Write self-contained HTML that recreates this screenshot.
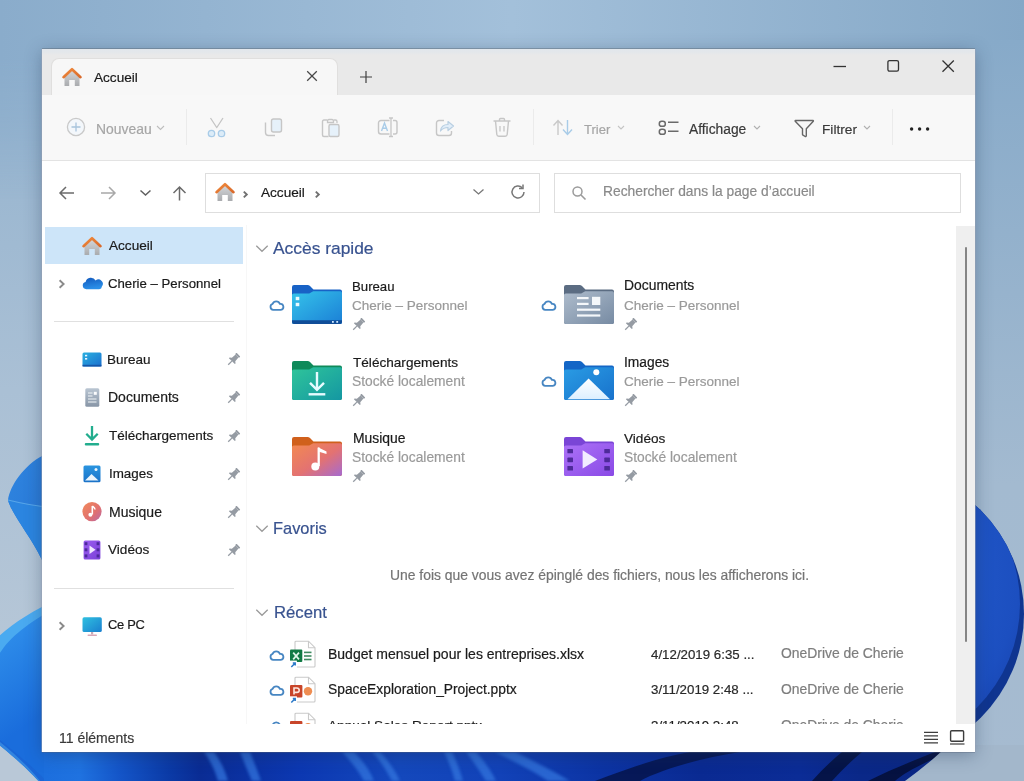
<!DOCTYPE html>
<html><head><meta charset="utf-8">
<style>
html,body{margin:0;padding:0}
body{width:1024px;height:781px;overflow:hidden;position:relative;font-family:"Liberation Sans",sans-serif;background:#93b3cf}
.a{position:absolute}
.t{position:absolute;line-height:1;white-space:nowrap;color:#1b1b1b;will-change:transform;-webkit-text-stroke:0.2px currentColor}
svg{position:absolute;overflow:visible}
</style></head><body>
<!-- wallpaper -->
<svg class="a" style="left:0;top:0" width="1024" height="781" viewBox="0 0 1024 781">
<defs>
<linearGradient id="bgG" x1="0" y1="0" x2="1" y2="0">
<stop offset="0" stop-color="#8aaccb"/><stop offset="0.5" stop-color="#a3c0da"/><stop offset="1" stop-color="#85a8c7"/>
</linearGradient>
<linearGradient id="bgL" x1="0" y1="0" x2="0" y2="1">
<stop offset="0" stop-color="#8fb0cd"/><stop offset="0.5" stop-color="#aac0d5"/><stop offset="1" stop-color="#bccad8"/>
</linearGradient>
<linearGradient id="bgR" x1="0" y1="0" x2="0" y2="1">
<stop offset="0" stop-color="#87aac9"/><stop offset="0.6" stop-color="#a3bad0"/><stop offset="1" stop-color="#a6bbd0"/>
</linearGradient>
<linearGradient id="pt1" x1="0" y1="0" x2="1" y2="1">
<stop offset="0" stop-color="#2f86e0"/><stop offset="0.55" stop-color="#2a7ad8"/><stop offset="1" stop-color="#1c5fc8"/>
</linearGradient>
<linearGradient id="pt2" x1="0" y1="0" x2="1" y2="1">
<stop offset="0" stop-color="#3a95ea"/><stop offset="0.5" stop-color="#1d6fdc"/><stop offset="1" stop-color="#1650c0"/>
</linearGradient>
<linearGradient id="bb" x1="0" y1="0" x2="1" y2="0">
<stop offset="0" stop-color="#1f6fe0"/><stop offset="0.17" stop-color="#0f44b0"/><stop offset="0.25" stop-color="#1a58c8"/><stop offset="0.32" stop-color="#0a2f98"/><stop offset="0.45" stop-color="#1550c8"/><stop offset="0.55" stop-color="#0f3cae"/><stop offset="0.62" stop-color="#0a2c98"/><stop offset="0.75" stop-color="#0b35a8"/><stop offset="0.85" stop-color="#0a2680"/><stop offset="1" stop-color="#0a2680"/>
</linearGradient>
<linearGradient id="tmg" x1="0" y1="0" x2="0" y2="200" gradientUnits="userSpaceOnUse"><stop offset="0" stop-color="#fff"/><stop offset="0.3" stop-color="#fff"/><stop offset="1" stop-color="#000"/></linearGradient>
<radialGradient id="disc" cx="0.4" cy="0.4" r="0.7">
<stop offset="0" stop-color="#2a66d6"/><stop offset="0.85" stop-color="#1c4fc0"/><stop offset="1" stop-color="#1845b2"/>
</radialGradient>
</defs>
<rect width="1024" height="781" fill="url(#bgL)"/>
<mask id="tm"><rect width="1024" height="781" fill="url(#tmg)"/></mask><rect x="0" y="0" width="1024" height="200" fill="url(#bgG)" mask="url(#tm)"/>
<rect x="960" y="40" width="64" height="741" fill="url(#bgR)"/>
<!-- left petals -->
<path d="M60 448 L42 456 C25 465 10 485 8 500 C12 515 30 535 42 560 L60 575 Z" fill="url(#pt1)"/>
<path d="M8 500 C20 503 32 506 60 507 L60 575 L42 560 C30 535 12 515 8 500 Z" fill="#2b85e0"/>
<path d="M8 500 C20 503 32 506 50 507" fill="none" stroke="#7cc4f4" stroke-width="1.2" opacity="0.55"/>
<linearGradient id="pt3" x1="0" y1="620" x2="60" y2="700" gradientUnits="userSpaceOnUse"><stop offset="0" stop-color="#3192ec"/><stop offset="1" stop-color="#1a6ddc"/></linearGradient>
<path d="M60 598 C30 612 10 625 -5 640 L-5 742 C15 758 28 770 38 781 L60 781 Z" fill="#4aaaf0"/>
<path d="M60 606 C35 618 12 635 2 650 L-5 660 L-5 738 C15 754 28 766 40 781 L60 781 Z" fill="url(#pt3)"/>
<path d="M-5 742 C15 758 28 770 38 781 L46 781 C34 768 20 756 -5 736 Z" fill="#1a60d0" opacity="0.5"/>
<!-- bottom band -->
<linearGradient id="bb2" x1="0" y1="0" x2="1024" y2="0" gradientUnits="userSpaceOnUse"><stop offset="0.0000" stop-color="#1c6fde"/><stop offset="0.0450" stop-color="#1c6fde"/><stop offset="0.0780" stop-color="#1f72e0"/><stop offset="0.1172" stop-color="#1455c8"/><stop offset="0.1660" stop-color="#0b3aa6"/><stop offset="0.1953" stop-color="#0a2c94"/><stop offset="0.2930" stop-color="#0c38b2"/><stop offset="0.3906" stop-color="#1448bc"/><stop offset="0.4883" stop-color="#1242b8"/><stop offset="0.5859" stop-color="#0c34a4"/><stop offset="0.6836" stop-color="#0a2a92"/><stop offset="0.7812" stop-color="#0b2c96"/><stop offset="0.8398" stop-color="#0a2888"/><stop offset="1.0000" stop-color="#0a2680"/></linearGradient>
<path d="M44 745 L1024 745 L1024 781 L44 781 Z" fill="url(#bb2)"/>
<path d="M-5 742 C15 758 28 770 38 781 L-5 781 Z" fill="#b9c8d7"/>
<filter id="bl" x="-20%" y="-20%" width="140%" height="140%"><feGaussianBlur stdDeviation="1.6"/></filter><g fill="#3478e0" opacity="0.7" filter="url(#bl)">
<path d="M204 752 L214 752 C220 760 225 770 228 781 L218 781 C215 770 210 760 204 752 Z"/>
<path d="M240 752 L250 752 C254 762 258 772 261 781 L252 781 C248 772 244 762 240 752 Z"/>
<path d="M342 752 L354 752 C362 760 370 770 374 781 L364 781 C358 770 350 760 342 752 Z"/>
<path d="M372 752 L380 752 C388 760 395 770 400 781 L392 781 C386 770 380 760 372 752 Z"/>
<path d="M444 752 L452 752 C456 760 460 770 463 781 L455 781 C452 770 448 760 444 752 Z"/>
<path d="M466 752 L476 752 C485 762 492 772 496 781 L486 781 C480 772 474 762 466 752 Z"/>
<path d="M495 752 L515 752 C535 762 555 772 570 781 L548 781 C535 772 515 762 495 752 Z"/>
</g>
<path d="M595 781 C625 770 655 758 690 752 L740 752 C700 758 660 770 640 781 Z" fill="#051650" opacity="0.9"/>
<path d="M812 781 C822 770 832 760 842 752 L862 752 C850 762 840 772 832 781 Z" fill="#040d30" opacity="0.75"/>
<path d="M868 781 C890 770 915 760 935 752 L950 752 C925 762 905 772 895 781 Z" fill="#040d30" opacity="0.8"/>
<path d="M948 745 L1024 745 L1024 781 L905 781 C920 770 935 758 948 745 Z" fill="#a3b7cb"/>
<!-- right disc -->
<clipPath id="rc"><rect x="975" y="0" width="60" height="781"/></clipPath><clipPath id="oc"><circle cx="878" cy="614" r="146"/></clipPath><g clip-path="url(#rc)"><circle cx="878" cy="614" r="146" fill="#0f3590"/><g clip-path="url(#oc)"><circle cx="874" cy="604" r="146" fill="url(#disc)"/></g></g>
</svg>
<!-- window -->
<div class="a" style="left:42px;top:49px;width:933px;height:703px;background:#fff;box-shadow:0 -1px 0 rgba(90,100,110,0.4),-1px 0 0 rgba(150,160,180,0.5),1px 0 0 rgba(150,160,180,0.5),0 1px 0 rgba(90,100,120,0.35),0 3px 16px rgba(30,50,80,0.36)"></div>
<!-- tab bar -->
<div class="a" style="left:42px;top:49px;width:933px;height:46px;background:linear-gradient(#e2e7ec 0px,#e3e7eb 3px,#e9e9e9 6px,#e9e9e9 100%)"></div>
<!-- tab -->
<div class="a" style="left:51px;top:57.5px;width:285px;height:38px;background:#f7f7f7;border:1px solid #e0dfde;border-bottom:none;border-radius:8px 8px 0 0"></div>
<!-- toolbar -->
<div class="a" style="left:42px;top:95px;width:933px;height:65px;background:#f8f8f8;border-bottom:1px solid #e3e3e3"></div>

<div class="t" style="left:94px;top:71px;font-size:13.6px">Accueil</div>
<div class="t" style="left:95.7px;top:122.9px;font-size:13.9px;color:#a6a6a6">Nouveau</div>
<div class="t" style="left:584.3px;top:122.9px;font-size:13px;color:#a6a6a6">Trier</div>
<div class="t" style="left:689.3px;top:122.9px;font-size:13.8px;color:#3a3a3a">Affichage</div>
<div class="t" style="left:821.7px;top:122.9px;font-size:13.7px;color:#3a3a3a">Filtrer</div>


<!-- address box -->
<div class="a" style="left:205px;top:173px;width:333px;height:38px;border:1px solid #dedede;background:#fff"></div>
<div class="a" style="left:554px;top:173px;width:405px;height:38px;border:1px solid #dedede;background:#fff"></div>
<!-- tab bar icons -->
<svg style="left:62px;top:67px" width="20" height="20" viewBox="0 0 20 20">
<defs><linearGradient id="hb" x1="0" y1="0" x2="0" y2="1"><stop offset="0" stop-color="#d4d6d9"/><stop offset="1" stop-color="#a9abae"/></linearGradient>
<linearGradient id="hr" x1="0" y1="0" x2="1" y2="1"><stop offset="0" stop-color="#f08a3c"/><stop offset="1" stop-color="#d9692a"/></linearGradient></defs>
<path d="M2.5 9 L10 3.5 L17.5 9 V19 H12.8 V13 H7.2 V19 H2.5 Z" fill="url(#hb)"/>
<path d="M1.5 10.2 L10 2.2 L18.5 10.2" fill="none" stroke="url(#hr)" stroke-width="2.6" stroke-linecap="round" stroke-linejoin="round"/>
</svg>
<svg style="left:306px;top:70px" width="12" height="12" viewBox="0 0 12 12"><path d="M1.2 1.2 L10.8 10.8 M10.8 1.2 L1.2 10.8" stroke="#484848" stroke-width="1.25"/></svg>
<svg style="left:360px;top:71px" width="12" height="12" viewBox="0 0 12 12"><path d="M6 0 V12 M0 6 H12" stroke="#404040" stroke-width="1.2"/></svg>
<!-- window controls -->
<svg style="left:833px;top:60px" width="14" height="14" viewBox="0 0 14 14"><path d="M0.5 6.5 H13" stroke="#333" stroke-width="1.3"/></svg>
<svg style="left:886px;top:59px" width="14" height="14" viewBox="0 0 14 14"><rect x="1.9" y="1.6" width="10.6" height="10.6" rx="1.6" fill="none" stroke="#333" stroke-width="1.3"/></svg>
<svg style="left:941px;top:59px" width="14" height="14" viewBox="0 0 14 14"><path d="M1.5 1.5 L12.8 12.8 M12.8 1.5 L1.5 12.8" stroke="#333" stroke-width="1.3"/></svg>

<!-- toolbar icons -->
<svg style="left:66px;top:117px" width="20" height="20" viewBox="0 0 20 20"><circle cx="10" cy="10" r="8.6" fill="#f3f7fb" stroke="#c9c9c9" stroke-width="1.3"/><path d="M10 5.5 V14.5 M5.5 10 H14.5" stroke="#a8c4dc" stroke-width="1.3"/></svg>
<svg style="left:156px;top:125px" width="9" height="6" viewBox="0 0 9 6"><path d="M1 1 L4.5 4.5 L8 1" fill="none" stroke="#bdbdbd" stroke-width="1.1"/></svg>
<div class="a" style="left:186px;top:109px;width:1px;height:36px;background:#ebebeb"></div>
<svg style="left:205px;top:115px" width="24" height="24" viewBox="0 0 24 24"><path d="M5.5 3 L12 13 M18 3 L11.5 13" stroke="#c4c4c4" stroke-width="1.3" fill="none"/><circle cx="6.5" cy="18.5" r="3.2" fill="#dcecf8" stroke="#a9cce8" stroke-width="1.3"/><circle cx="16.5" cy="18.5" r="3.2" fill="#dcecf8" stroke="#a9cce8" stroke-width="1.3"/></svg>
<svg style="left:262px;top:116px" width="22" height="22" viewBox="0 0 22 22"><path d="M3.5 6.5 V16.5 A3 3 0 0 0 6.5 19.5 H13" fill="none" stroke="#c6c6c6" stroke-width="1.4"/><rect x="9.5" y="3" width="10" height="13" rx="2" fill="#e6f1fa" stroke="#c6c6c6" stroke-width="1.4"/></svg>
<svg style="left:320px;top:116px" width="22" height="22" viewBox="0 0 22 22"><path d="M7 4 H4 A1.5 1.5 0 0 0 2.5 5.5 V19 A1.5 1.5 0 0 0 4 20.5 H8.5" fill="none" stroke="#c6c6c6" stroke-width="1.4"/><path d="M7.5 5 A1.5 1.5 0 0 1 9 3.5 H12 A1.5 1.5 0 0 1 13.5 5 V6.5 H7.5 Z" fill="none" stroke="#c6c6c6" stroke-width="1.3"/><path d="M14 4 H15.5 A1.5 1.5 0 0 1 17 5.5 V7" fill="none" stroke="#c6c6c6" stroke-width="1.3"/><rect x="9" y="8.5" width="10" height="12" rx="1.5" fill="#e6f1fa" stroke="#c6c6c6" stroke-width="1.4"/></svg>
<svg style="left:377px;top:116px" width="22" height="22" viewBox="0 0 22 22"><path d="M12.5 4.5 H4 A2.5 2.5 0 0 0 1.5 7 V15.5 A2.5 2.5 0 0 0 4 18 H12.5" fill="none" stroke="#c6c6c6" stroke-width="1.4"/><path d="M16 4.5 H18 A2 2 0 0 1 20 6.5 V16 A2 2 0 0 1 18 18 H16" fill="none" stroke="#c6c6c6" stroke-width="1.4"/><path d="M14 2 V20.5 M12 2 H16 M12 20.5 H16" stroke="#c6c6c6" stroke-width="1.3"/><path d="M4.5 15 L7.5 7 L10.5 15 M5.6 12.3 H9.4" fill="none" stroke="#a9cce8" stroke-width="1.4"/></svg>
<svg style="left:434px;top:116px" width="22" height="22" viewBox="0 0 22 22"><path d="M10 4.5 H5 A2.5 2.5 0 0 0 2.5 7 V17 A2.5 2.5 0 0 0 5 19.5 H15 A2.5 2.5 0 0 0 17.5 17 V15" fill="none" stroke="#c6c6c6" stroke-width="1.4"/><path d="M6.5 15 C7 10.5 10 8.5 14 8.5 V5.5 L19.5 10 L14 14.5 V11.5 C11 11.5 8.5 12.5 6.5 15 Z" fill="#e2eef9" stroke="#b8cfe2" stroke-width="1.2" stroke-linejoin="round"/></svg>
<svg style="left:491px;top:116px" width="22" height="22" viewBox="0 0 22 22"><path d="M2.5 5 H19.5 M8.5 5 V3.5 A1 1 0 0 1 9.5 2.5 H12.5 A1 1 0 0 1 13.5 3.5 V5" fill="none" stroke="#c6c6c6" stroke-width="1.4"/><path d="M4.5 5 L5.8 18.5 A2 2 0 0 0 7.8 20.2 H14.2 A2 2 0 0 0 16.2 18.5 L17.5 5" fill="none" stroke="#c6c6c6" stroke-width="1.4"/><path d="M9 10 V15.5 M13 10 V15.5" stroke="#c6c6c6" stroke-width="1.3"/></svg>
<div class="a" style="left:533px;top:109px;width:1px;height:36px;background:#ebebeb"></div>
<svg style="left:552px;top:119px" width="22" height="17" viewBox="0 0 22 17"><path d="M6 16 V2 M1.5 6.5 L6 1.5 L10.5 6.5" fill="none" stroke="#c9c9c9" stroke-width="1.4"/><path d="M15.5 1 V15 M11 10.5 L15.5 15.5 L20 10.5" fill="none" stroke="#a9cce8" stroke-width="1.4"/></svg>
<svg style="left:617px;top:125px" width="8" height="6" viewBox="0 0 8 6"><path d="M1 1 L4 4 L7 1" fill="none" stroke="#c4c4c4" stroke-width="1.1"/></svg>
<svg style="left:657px;top:119px" width="24" height="18" viewBox="0 0 24 18"><rect x="2.3" y="2.3" width="6" height="5" rx="2.4" fill="none" stroke="#6a6a6a" stroke-width="1.5"/><rect x="2.3" y="10.3" width="6" height="5" rx="2.4" fill="none" stroke="#6a6a6a" stroke-width="1.5"/><path d="M11 3.3 H21.5 M11 12.3 H21.5" stroke="#6a6a6a" stroke-width="1.5"/></svg>
<svg style="left:753px;top:125px" width="8" height="6" viewBox="0 0 8 6"><path d="M1 1 L4 4 L7 1" fill="none" stroke="#b0b0b0" stroke-width="1.1"/></svg>
<svg style="left:794px;top:119px" width="21" height="19" viewBox="0 0 21 19"><path d="M1.5 1.5 H19 A0.5 0.5 0 0 1 19.3 2.3 L12.3 9.8 V16.8 A0.8 0.8 0 0 1 11.2 17.5 L9 16.2 A1 1 0 0 1 8.5 15.4 V9.8 L1.2 2.3 A0.5 0.5 0 0 1 1.5 1.5 Z" fill="none" stroke="#666" stroke-width="1.4" stroke-linejoin="round"/></svg>
<svg style="left:863px;top:125px" width="8" height="6" viewBox="0 0 8 6"><path d="M1 1 L4 4 L7 1" fill="none" stroke="#b0b0b0" stroke-width="1.1"/></svg>
<div class="a" style="left:892px;top:109px;width:1px;height:36px;background:#ebebeb"></div>
<svg style="left:909px;top:126px" width="22" height="6" viewBox="0 0 22 6"><circle cx="2.6" cy="3" r="1.7" fill="#222"/><circle cx="10.6" cy="3" r="1.7" fill="#222"/><circle cx="18.6" cy="3" r="1.7" fill="#222"/></svg>

<!-- nav -->
<svg style="left:58px;top:185px" width="17" height="16" viewBox="0 0 17 16"><path d="M16 8 H2.5 M8 2 L2 8 L8 14" fill="none" stroke="#6b6b6b" stroke-width="1.5"/></svg>
<svg style="left:100px;top:185px" width="17" height="16" viewBox="0 0 17 16"><path d="M1 8 H14.5 M9 2 L15 8 L9 14" fill="none" stroke="#a8a8a8" stroke-width="1.5"/></svg>
<svg style="left:139px;top:189px" width="13" height="8" viewBox="0 0 13 8"><path d="M1.5 1.5 L6.5 6 L11.5 1.5" fill="none" stroke="#606060" stroke-width="1.5"/></svg>
<svg style="left:171px;top:185px" width="17" height="16" viewBox="0 0 17 16"><path d="M8.5 15.5 V2 M2.5 8 L8.5 2 L14.5 8" fill="none" stroke="#6b6b6b" stroke-width="1.5"/></svg>
<svg style="left:215px;top:182px" width="20" height="20" viewBox="0 0 20 20">
<path d="M2.5 9 L10 3.5 L17.5 9 V19 H12.8 V13 H7.2 V19 H2.5 Z" fill="url(#hb)"/>
<path d="M1.5 10.2 L10 2.2 L18.5 10.2" fill="none" stroke="url(#hr)" stroke-width="2.6" stroke-linecap="round" stroke-linejoin="round"/>
</svg>
<svg style="left:242px;top:190px" width="7" height="9" viewBox="0 0 7 9"><path d="M1.8 1.6 L4.8 4.5 L1.8 7.4" fill="none" stroke="#707070" stroke-width="1.9"/></svg>
<svg style="left:314px;top:190px" width="7" height="9" viewBox="0 0 7 9"><path d="M1.8 1.6 L4.8 4.5 L1.8 7.4" fill="none" stroke="#707070" stroke-width="1.9"/></svg>
<svg style="left:472px;top:188px" width="13" height="8" viewBox="0 0 13 8"><path d="M1.5 1.5 L6.5 6 L11.5 1.5" fill="none" stroke="#777" stroke-width="1.3"/></svg>
<svg style="left:509px;top:183px" width="18" height="18" viewBox="0 0 18 18"><path d="M15 9 A6 6 0 1 1 13.2 4.7" fill="none" stroke="#777" stroke-width="1.5"/><path d="M14 1.5 V5.5 H10" fill="none" stroke="#777" stroke-width="1.5"/></svg>
<svg style="left:571px;top:185px" width="16" height="16" viewBox="0 0 16 16"><circle cx="6.5" cy="6.5" r="4.5" fill="none" stroke="#9b9b9b" stroke-width="1.5"/><path d="M10 10 L14.5 14.5" stroke="#9b9b9b" stroke-width="1.6"/></svg>

<div class="t" style="left:260.6px;top:185.6px;font-size:13.6px">Accueil</div>
<div class="t" style="left:603.2px;top:185.2px;font-size:13.8px;color:#8a8a8a">Rechercher dans la page d’accueil</div>

<!-- sidebar -->
<div class="a" style="left:45px;top:227px;width:198px;height:37px;background:#cde5f9"></div>
<div class="a" style="left:246px;top:225px;width:1px;height:499px;background:#f7f7f7"></div>
<div class="a" style="left:54px;top:321px;width:180px;height:1px;background:#e0e0e0"></div>
<div class="a" style="left:54px;top:588px;width:180px;height:1px;background:#e0e0e0"></div>
<div class="t" style="left:108.7px;top:238.9px;font-size:13.6px">Accueil</div>
<div class="t" style="left:108px;top:277px;font-size:13.2px">Cherie – Personnel</div>
<div class="t" style="left:107.2px;top:353px;font-size:13.5px">Bureau</div>
<div class="t" style="left:107.6px;top:390.0px;font-size:14px">Documents</div>
<div class="t" style="left:108.7px;top:429.2px;font-size:13.5px">Téléchargements</div>
<div class="t" style="left:108.7px;top:467.2px;font-size:13.4px">Images</div>
<div class="t" style="left:108.7px;top:504.6px;font-size:14px">Musique</div>
<div class="t" style="left:107.6px;top:543px;font-size:13.6px">Vidéos</div>
<div class="t" style="left:108.2px;top:619.3px;font-size:12.9px;letter-spacing:-0.3px">Ce PC</div>
<div class="t" style="left:59px;top:731px;font-size:14px;color:#3a3a3a">11 éléments</div>


<!-- sidebar icons -->
<svg style="left:82px;top:236px" width="20" height="20" viewBox="0 0 20 20">
<path d="M2.5 9 L10 3.5 L17.5 9 V19 H12.8 V13 H7.2 V19 H2.5 Z" fill="url(#hb)"/>
<path d="M1.5 10.2 L10 2.2 L18.5 10.2" fill="none" stroke="url(#hr)" stroke-width="2.6" stroke-linecap="round" stroke-linejoin="round"/>
</svg>
<svg style="left:57px;top:278px" width="9" height="12" viewBox="0 0 9 12"><path d="M2.6 2.3 L6.6 6 L2.6 9.7" fill="none" stroke="#8a8a8a" stroke-width="1.9"/></svg>
<svg style="left:82px;top:276px" width="21" height="14" viewBox="0 0 21 14"><defs><linearGradient id="od" x1="0" y1="0" x2="0.3" y2="1"><stop offset="0" stop-color="#1259bd"/><stop offset="1" stop-color="#2b8fe8"/></linearGradient></defs>
<path d="M4.3 13.2 A3.7 3.7 0 0 1 3.6 5.9 A5.4 5.4 0 0 1 13.6 4.6 A4.3 4.3 0 0 1 19.9 10.4 A3 3 0 0 1 17.2 13.2 Z" fill="url(#od)"/></svg>
<svg style="left:82px;top:352px" width="20" height="15" viewBox="0 0 20 15"><defs><linearGradient id="dk" x1="0" y1="0" x2="1" y2="1"><stop offset="0" stop-color="#2ab0e0"/><stop offset="1" stop-color="#1a6fcf"/></linearGradient></defs>
<rect x="0.5" y="0.5" width="19" height="14" rx="1.5" fill="url(#dk)"/><rect x="0.5" y="12.8" width="19" height="1.7" fill="#1656a8"/><rect x="3" y="2.8" width="2.2" height="1.6" fill="#e8f6ff"/><rect x="3" y="6" width="2.2" height="1.6" fill="#e8f6ff"/></svg>
<svg style="left:85px;top:388px" width="15" height="19" viewBox="0 0 15 19"><defs><linearGradient id="dc" x1="0" y1="0" x2="0" y2="1"><stop offset="0" stop-color="#b9c5d2"/><stop offset="1" stop-color="#8795a6"/></linearGradient></defs>
<rect x="0.3" y="0.3" width="14" height="18.5" rx="1.5" fill="url(#dc)"/><path d="M3 5 H7.5 M3 8 H7.5 M3 11 H11.5 M3 14 H11.5" stroke="#f2f5f8" stroke-width="1.2"/><rect x="8.8" y="3.8" width="3" height="3" fill="#fbfcfd"/></svg>
<svg style="left:84px;top:425px" width="16" height="21" viewBox="0 0 16 21"><path d="M8 1 V14.5 M2.3 8.8 L8 14.5 L13.7 8.8" fill="none" stroke="#22ad8e" stroke-width="2.3"/><rect x="0.8" y="18" width="14.4" height="2.5" rx="1.1" fill="#22ad8e"/></svg>
<svg style="left:83px;top:465px" width="18" height="18" viewBox="0 0 18 18"><defs><linearGradient id="im" x1="0" y1="0" x2="0" y2="1"><stop offset="0" stop-color="#2a95e0"/><stop offset="1" stop-color="#1a72c8"/></linearGradient></defs>
<rect x="0.5" y="0.5" width="17" height="16.8" rx="1.5" fill="url(#im)"/><path d="M2 15.6 L8.5 9 L15.5 15.6 Z" fill="#eaf4fc"/><circle cx="13" cy="4.6" r="1.5" fill="#eaf4fc"/></svg>
<svg style="left:82px;top:501px" width="20" height="21" viewBox="0 0 20 21"><defs><linearGradient id="mu" x1="0" y1="0" x2="1" y2="1"><stop offset="0" stop-color="#f28a5a"/><stop offset="0.6" stop-color="#e07070"/><stop offset="1" stop-color="#b86aa8"/></linearGradient></defs>
<circle cx="10" cy="10.6" r="9.6" fill="url(#mu)"/><path d="M10.3 5 V13.5" stroke="#fff" stroke-width="1.6"/><path d="M10.3 5 C11.5 6 13 6.5 13 8.5" fill="none" stroke="#fff" stroke-width="1.5"/><circle cx="8.4" cy="13.7" r="2" fill="#fff"/></svg>
<svg style="left:83px;top:540px" width="18" height="20" viewBox="0 0 18 20"><defs><linearGradient id="vd" x1="0" y1="0" x2="1" y2="1"><stop offset="0" stop-color="#9b5ef0"/><stop offset="1" stop-color="#7a3fd8"/></linearGradient></defs>
<rect x="0.6" y="0.4" width="16.8" height="19" rx="1.5" fill="url(#vd)"/>
<g fill="#4d2a9c"><rect x="1.6" y="2.2" width="2.8" height="3"/><rect x="1.6" y="8.3" width="2.8" height="3"/><rect x="1.6" y="14.4" width="2.8" height="3"/><rect x="13.6" y="2.2" width="2.8" height="3"/><rect x="13.6" y="8.3" width="2.8" height="3"/><rect x="13.6" y="14.4" width="2.8" height="3"/></g>
<path d="M6.5 5.5 L12.5 9.8 L6.5 14 Z" fill="#f0e8ff"/></svg>
<svg style="left:57px;top:620px" width="9" height="12" viewBox="0 0 9 12"><path d="M2.6 2.3 L6.6 6 L2.6 9.7" fill="none" stroke="#8a8a8a" stroke-width="1.9"/></svg>
<svg style="left:82px;top:617px" width="20" height="20" viewBox="0 0 20 20"><defs><linearGradient id="pc" x1="0" y1="0" x2="1" y2="1"><stop offset="0" stop-color="#2fc0e0"/><stop offset="1" stop-color="#1a7fcf"/></linearGradient></defs>
<rect x="0.5" y="0.3" width="19.3" height="14.8" rx="1.6" fill="url(#pc)"/><rect x="9" y="15" width="2.2" height="2.5" fill="#c9a9b5"/><rect x="5.5" y="17.5" width="9.5" height="1.4" rx="0.7" fill="#d9a7b8"/></svg>
<svg style="left:226px;top:353px" width="14" height="14" viewBox="0 0 14 14"><g transform="rotate(45 7 7)" fill="#959ba3"><rect x="4.3" y="-0.6" width="5.4" height="1.9" rx="0.5"/><path d="M5 1.3 H9 L9.4 6.2 L11.2 7.6 V8.6 H2.8 V7.6 L4.6 6.2 Z"/><rect x="6.35" y="8.6" width="1.3" height="5.2"/></g></svg><svg style="left:226px;top:391px" width="14" height="14" viewBox="0 0 14 14"><g transform="rotate(45 7 7)" fill="#959ba3"><rect x="4.3" y="-0.6" width="5.4" height="1.9" rx="0.5"/><path d="M5 1.3 H9 L9.4 6.2 L11.2 7.6 V8.6 H2.8 V7.6 L4.6 6.2 Z"/><rect x="6.35" y="8.6" width="1.3" height="5.2"/></g></svg><svg style="left:226px;top:430px" width="14" height="14" viewBox="0 0 14 14"><g transform="rotate(45 7 7)" fill="#959ba3"><rect x="4.3" y="-0.6" width="5.4" height="1.9" rx="0.5"/><path d="M5 1.3 H9 L9.4 6.2 L11.2 7.6 V8.6 H2.8 V7.6 L4.6 6.2 Z"/><rect x="6.35" y="8.6" width="1.3" height="5.2"/></g></svg><svg style="left:226px;top:468px" width="14" height="14" viewBox="0 0 14 14"><g transform="rotate(45 7 7)" fill="#959ba3"><rect x="4.3" y="-0.6" width="5.4" height="1.9" rx="0.5"/><path d="M5 1.3 H9 L9.4 6.2 L11.2 7.6 V8.6 H2.8 V7.6 L4.6 6.2 Z"/><rect x="6.35" y="8.6" width="1.3" height="5.2"/></g></svg><svg style="left:226px;top:506px" width="14" height="14" viewBox="0 0 14 14"><g transform="rotate(45 7 7)" fill="#959ba3"><rect x="4.3" y="-0.6" width="5.4" height="1.9" rx="0.5"/><path d="M5 1.3 H9 L9.4 6.2 L11.2 7.6 V8.6 H2.8 V7.6 L4.6 6.2 Z"/><rect x="6.35" y="8.6" width="1.3" height="5.2"/></g></svg><svg style="left:226px;top:544px" width="14" height="14" viewBox="0 0 14 14"><g transform="rotate(45 7 7)" fill="#959ba3"><rect x="4.3" y="-0.6" width="5.4" height="1.9" rx="0.5"/><path d="M5 1.3 H9 L9.4 6.2 L11.2 7.6 V8.6 H2.8 V7.6 L4.6 6.2 Z"/><rect x="6.35" y="8.6" width="1.3" height="5.2"/></g></svg>
<!-- content -->
<div class="t" style="left:272.6px;top:239.8px;font-size:17.4px;color:#38528f">Accès rapide</div>
<div class="t" style="left:352px;top:280px;font-size:13.2px">Bureau</div>
<div class="t" style="left:352px;top:299px;font-size:13.5px;color:#9a9a9a">Cherie – Personnel</div>
<div class="t" style="left:352.6px;top:356.3px;font-size:13.6px">Téléchargements</div>
<div class="t" style="left:352px;top:375.3px;font-size:13.8px;color:#9a9a9a">Stocké localement</div>
<div class="t" style="left:352.5px;top:431.8px;font-size:13.9px">Musique</div>
<div class="t" style="left:352px;top:451px;font-size:13.8px;color:#9a9a9a">Stocké localement</div>
<div class="t" style="left:624px;top:279.2px;font-size:13.9px">Documents</div>
<div class="t" style="left:624px;top:299px;font-size:13.5px;color:#9a9a9a">Cherie – Personnel</div>
<div class="t" style="left:624px;top:356px;font-size:13.8px">Images</div>
<div class="t" style="left:624px;top:375.3px;font-size:13.5px;color:#9a9a9a">Cherie – Personnel</div>
<div class="t" style="left:623.5px;top:432.2px;font-size:13.6px">Vidéos</div>
<div class="t" style="left:623.5px;top:451px;font-size:13.8px;color:#9a9a9a">Stocké localement</div>

<div class="t" style="left:273px;top:519.9px;font-size:16.4px;color:#38528f">Favoris</div>
<div class="t" style="left:389.5px;top:569px;font-size:13.9px;color:#747474">Une fois que vous avez épinglé des fichiers, nous les afficherons ici.</div>
<div class="t" style="left:273.8px;top:605.2px;font-size:16.7px;color:#38528f">Récent</div>

<div class="t" style="left:328.2px;top:647.3px;font-size:14px">Budget mensuel pour les entreprises.xlsx</div>
<div class="t" style="left:327.7px;top:683px;font-size:13.8px">SpaceExploration_Project.pptx</div>
<div class="t" style="left:651px;top:647.8px;font-size:13.3px;color:#2a2a2a">4/12/2019 6:35 ...</div>
<div class="t" style="left:651px;top:683.4px;font-size:13.3px;color:#2a2a2a">3/11/2019 2:48 ...</div>
<div class="t" style="left:780.8px;top:647.3px;font-size:13.9px;color:#7d7d7d">OneDrive de Cherie</div>
<div class="t" style="left:780.8px;top:683px;font-size:13.9px;color:#7d7d7d">OneDrive de Cherie</div>

<svg style="left:292px;top:284.7px" width="50" height="39" viewBox="0 0 50 39"><defs><linearGradient id="f1" x1="0" y1="0" x2="1" y2="1"><stop offset="0" stop-color="#35c3ea"/><stop offset="1" stop-color="#1b7fd6"/></linearGradient></defs>
<path d="M0 2 Q0 0 2 0 H15.5 Q17 0 18 0.9 L21.5 4.6 H48 Q50 4.6 50 6.6 V37 Q50 39 48 39 H2 Q0 39 0 37 Z" fill="#1862c6"/>
<path d="M0 10 Q0 8.4 1.8 8.4 H17.2 L21.2 6.2 H48.2 Q50 6.2 50 8 V37 Q50 39 48 39 H2 Q0 39 0 37 Z" fill="url(#f1)"/><path d="M0 35.3 H50 V36.8 Q50 39 47.8 39 H2.2 Q0 39 0 36.8 Z" fill="#104d98"/><rect x="3.7" y="11.8" width="3.6" height="3.4" fill="#eafaff"/><rect x="3.7" y="17.8" width="3.6" height="3.4" fill="#eafaff"/><rect x="40" y="36" width="1.8" height="1.8" fill="#cfe8ff"/><rect x="44.3" y="36" width="1.8" height="1.8" fill="#cfe8ff"/></svg><svg style="left:292px;top:360.7px" width="50" height="39" viewBox="0 0 50 39"><defs><linearGradient id="f2" x1="0" y1="0" x2="1" y2="1"><stop offset="0" stop-color="#2fc59a"/><stop offset="1" stop-color="#1497a2"/></linearGradient></defs>
<path d="M0 2 Q0 0 2 0 H15.5 Q17 0 18 0.9 L21.5 4.6 H48 Q50 4.6 50 6.6 V37 Q50 39 48 39 H2 Q0 39 0 37 Z" fill="#0f8a5a"/>
<path d="M0 10 Q0 8.4 1.8 8.4 H17.2 L21.2 6.2 H48.2 Q50 6.2 50 8 V37 Q50 39 48 39 H2 Q0 39 0 37 Z" fill="url(#f2)"/><path d="M25 11 V28.5 M18 21.8 L25 28.8 L32 21.8" fill="none" stroke="#e6fbff" stroke-width="2.4"/><rect x="16.6" y="32.1" width="16.7" height="2.4" fill="#e6fbff"/></svg><svg style="left:292px;top:436.7px" width="50" height="39" viewBox="0 0 50 39"><defs><linearGradient id="f3" x1="0" y1="0" x2="1" y2="1"><stop offset="0" stop-color="#f38a50"/><stop offset="0.55" stop-color="#e37272"/><stop offset="1" stop-color="#a56ad0"/></linearGradient></defs>
<path d="M0 2 Q0 0 2 0 H15.5 Q17 0 18 0.9 L21.5 4.6 H48 Q50 4.6 50 6.6 V37 Q50 39 48 39 H2 Q0 39 0 37 Z" fill="#d0601c"/>
<path d="M0 10 Q0 8.4 1.8 8.4 H17.2 L21.2 6.2 H48.2 Q50 6.2 50 8 V37 Q50 39 48 39 H2 Q0 39 0 37 Z" fill="url(#f3)"/><path d="M26.7 10.6 V29" stroke="#fff" stroke-width="2.3"/><path d="M26 10.2 L34.5 14.5 L34.5 17 L27 14.8 Z" fill="#fff"/><circle cx="23.3" cy="29.5" r="4" fill="#fff"/></svg><svg style="left:564px;top:284.7px" width="50" height="39" viewBox="0 0 50 39"><defs><linearGradient id="f4" x1="0" y1="0" x2="1" y2="1"><stop offset="0" stop-color="#aebccc"/><stop offset="1" stop-color="#778ba3"/></linearGradient></defs>
<path d="M0 2 Q0 0 2 0 H15.5 Q17 0 18 0.9 L21.5 4.6 H48 Q50 4.6 50 6.6 V37 Q50 39 48 39 H2 Q0 39 0 37 Z" fill="#5b6c82"/>
<path d="M0 10 Q0 8.4 1.8 8.4 H17.2 L21.2 6.2 H48.2 Q50 6.2 50 8 V37 Q50 39 48 39 H2 Q0 39 0 37 Z" fill="url(#f4)"/><g fill="#f4f7fa"><rect x="13" y="12" width="11.6" height="2.2"/><rect x="13" y="17.8" width="11.6" height="2.2"/><rect x="13" y="23.6" width="23.3" height="2.2"/><rect x="13" y="29.4" width="23.3" height="2.2"/><rect x="28" y="11.8" width="8.3" height="8.2"/></g></svg><svg style="left:564px;top:360.7px" width="50" height="39" viewBox="0 0 50 39"><defs><linearGradient id="f5" x1="0" y1="0" x2="1" y2="1"><stop offset="0" stop-color="#2a9ce4"/><stop offset="1" stop-color="#1872cc"/></linearGradient></defs>
<path d="M0 2 Q0 0 2 0 H15.5 Q17 0 18 0.9 L21.5 4.6 H48 Q50 4.6 50 6.6 V37 Q50 39 48 39 H2 Q0 39 0 37 Z" fill="#1466c6"/>
<path d="M0 10 Q0 8.4 1.8 8.4 H17.2 L21.2 6.2 H48.2 Q50 6.2 50 8 V37 Q50 39 48 39 H2 Q0 39 0 37 Z" fill="url(#f5)"/><defs><linearGradient id="mt" x1="0" y1="0" x2="0" y2="1"><stop offset="0" stop-color="#ffffff"/><stop offset="1" stop-color="#dcefff"/></linearGradient></defs><circle cx="32.3" cy="11.3" r="3" fill="#fff"/><path d="M3.5 38.2 L24.6 17.6 L46 38.2 Z" fill="url(#mt)"/></svg><svg style="left:564px;top:436.7px" width="50" height="39" viewBox="0 0 50 39"><defs><linearGradient id="f6" x1="0" y1="0" x2="1" y2="1"><stop offset="0" stop-color="#ac72f7"/><stop offset="1" stop-color="#8a4ae6"/></linearGradient></defs>
<path d="M0 2 Q0 0 2 0 H15.5 Q17 0 18 0.9 L21.5 4.6 H48 Q50 4.6 50 6.6 V37 Q50 39 48 39 H2 Q0 39 0 37 Z" fill="#7a45d6"/>
<path d="M0 10 Q0 8.4 1.8 8.4 H17.2 L21.2 6.2 H48.2 Q50 6.2 50 8 V37 Q50 39 48 39 H2 Q0 39 0 37 Z" fill="url(#f6)"/><g fill="#4e2a9a"><rect x="3.4" y="12" width="5.6" height="4.3" rx="0.6"/><rect x="3.4" y="20.6" width="5.6" height="4.6" rx="0.6"/><rect x="3.4" y="29" width="5.6" height="4.6" rx="0.6"/><rect x="40.3" y="12" width="5.6" height="4.3" rx="0.6"/><rect x="40.3" y="20.6" width="5.6" height="4.6" rx="0.6"/><rect x="40.3" y="29" width="5.6" height="4.6" rx="0.6"/></g><path d="M18.6 13.3 L33.3 22.4 L18.6 31.6 Z" fill="#f2ecff"/></svg><svg style="left:269px;top:299px" width="16" height="12" viewBox="0 0 16 12"><path d="M4.2 10.9 A3.1 3.1 0 0 1 3.6 4.9 A3.9 3.9 0 0 1 10.9 4.9 A3 3 0 0 1 11.8 10.9 Z" fill="none" stroke="#4786c2" stroke-width="1.8" stroke-linejoin="round"/></svg><svg style="left:541px;top:299px" width="16" height="12" viewBox="0 0 16 12"><path d="M4.2 10.9 A3.1 3.1 0 0 1 3.6 4.9 A3.9 3.9 0 0 1 10.9 4.9 A3 3 0 0 1 11.8 10.9 Z" fill="none" stroke="#4786c2" stroke-width="1.8" stroke-linejoin="round"/></svg><svg style="left:541px;top:375px" width="16" height="12" viewBox="0 0 16 12"><path d="M4.2 10.9 A3.1 3.1 0 0 1 3.6 4.9 A3.9 3.9 0 0 1 10.9 4.9 A3 3 0 0 1 11.8 10.9 Z" fill="none" stroke="#4786c2" stroke-width="1.8" stroke-linejoin="round"/></svg><svg style="left:351px;top:318px" width="14" height="14" viewBox="0 0 14 14"><g transform="rotate(45 7 7)" fill="#959ba3"><rect x="4.3" y="-0.6" width="5.4" height="1.9" rx="0.5"/><path d="M5 1.3 H9 L9.4 6.2 L11.2 7.6 V8.6 H2.8 V7.6 L4.6 6.2 Z"/><rect x="6.35" y="8.6" width="1.3" height="5.2"/></g></svg><svg style="left:351px;top:394px" width="14" height="14" viewBox="0 0 14 14"><g transform="rotate(45 7 7)" fill="#959ba3"><rect x="4.3" y="-0.6" width="5.4" height="1.9" rx="0.5"/><path d="M5 1.3 H9 L9.4 6.2 L11.2 7.6 V8.6 H2.8 V7.6 L4.6 6.2 Z"/><rect x="6.35" y="8.6" width="1.3" height="5.2"/></g></svg><svg style="left:351px;top:470px" width="14" height="14" viewBox="0 0 14 14"><g transform="rotate(45 7 7)" fill="#959ba3"><rect x="4.3" y="-0.6" width="5.4" height="1.9" rx="0.5"/><path d="M5 1.3 H9 L9.4 6.2 L11.2 7.6 V8.6 H2.8 V7.6 L4.6 6.2 Z"/><rect x="6.35" y="8.6" width="1.3" height="5.2"/></g></svg><svg style="left:623px;top:318px" width="14" height="14" viewBox="0 0 14 14"><g transform="rotate(45 7 7)" fill="#959ba3"><rect x="4.3" y="-0.6" width="5.4" height="1.9" rx="0.5"/><path d="M5 1.3 H9 L9.4 6.2 L11.2 7.6 V8.6 H2.8 V7.6 L4.6 6.2 Z"/><rect x="6.35" y="8.6" width="1.3" height="5.2"/></g></svg><svg style="left:623px;top:394px" width="14" height="14" viewBox="0 0 14 14"><g transform="rotate(45 7 7)" fill="#959ba3"><rect x="4.3" y="-0.6" width="5.4" height="1.9" rx="0.5"/><path d="M5 1.3 H9 L9.4 6.2 L11.2 7.6 V8.6 H2.8 V7.6 L4.6 6.2 Z"/><rect x="6.35" y="8.6" width="1.3" height="5.2"/></g></svg><svg style="left:623px;top:470px" width="14" height="14" viewBox="0 0 14 14"><g transform="rotate(45 7 7)" fill="#959ba3"><rect x="4.3" y="-0.6" width="5.4" height="1.9" rx="0.5"/><path d="M5 1.3 H9 L9.4 6.2 L11.2 7.6 V8.6 H2.8 V7.6 L4.6 6.2 Z"/><rect x="6.35" y="8.6" width="1.3" height="5.2"/></g></svg><svg style="left:254.5px;top:244px" width="14" height="9" viewBox="0 0 14 9"><path d="M1.3 1.8 L7 7.3 L12.7 1.8" fill="none" stroke="#9a9a9a" stroke-width="1.3"/></svg><svg style="left:254.5px;top:523.5px" width="14" height="9" viewBox="0 0 14 9"><path d="M1.3 1.8 L7 7.3 L12.7 1.8" fill="none" stroke="#9a9a9a" stroke-width="1.3"/></svg><svg style="left:254.5px;top:608px" width="14" height="9" viewBox="0 0 14 9"><path d="M1.3 1.8 L7 7.3 L12.7 1.8" fill="none" stroke="#9a9a9a" stroke-width="1.3"/></svg><svg style="left:269px;top:648.5px" width="16" height="12" viewBox="0 0 16 12"><path d="M4.2 10.9 A3.1 3.1 0 0 1 3.6 4.9 A3.9 3.9 0 0 1 10.9 4.9 A3 3 0 0 1 11.8 10.9 Z" fill="none" stroke="#4786c2" stroke-width="1.8" stroke-linejoin="round"/></svg><svg style="left:269px;top:684px" width="16" height="12" viewBox="0 0 16 12"><path d="M4.2 10.9 A3.1 3.1 0 0 1 3.6 4.9 A3.9 3.9 0 0 1 10.9 4.9 A3 3 0 0 1 11.8 10.9 Z" fill="none" stroke="#4786c2" stroke-width="1.8" stroke-linejoin="round"/></svg><svg style="left:289px;top:640px" width="28" height="30" viewBox="0 0 28 30">
<path d="M7 1.2 H19.5 L26 7.7 V26 A1 1 0 0 1 25 27 H7 A1 1 0 0 1 6 26 V2.2 A1 1 0 0 1 7 1.2 Z" fill="#fff" stroke="#c9c9c9" stroke-width="1.1"/>
<path d="M19.5 1.2 V7.7 H26" fill="none" stroke="#c9c9c9" stroke-width="1.1"/>
<g fill="#3e8a60"><rect x="15" y="11.6" width="7.5" height="1.6"/><rect x="15" y="15.2" width="7.5" height="1.6"/><rect x="15" y="18.7" width="7.5" height="1.6"/></g>
<rect x="1" y="9.6" width="12.3" height="12.5" rx="1" fill="#117a44"/>
<path d="M4.2 12.6 L10 19.4 M10 12.6 L4.2 19.4" stroke="#dff5e8" stroke-width="1.7"/>
<rect x="0.7" y="20.6" width="7.2" height="7.8" fill="#fff"/>
<path d="M2.3 27 L6 23.2 M3.8 23 H6.2 V25.4" fill="none" stroke="#2b79c8" stroke-width="1.5"/>
</svg><svg style="left:289px;top:676px" width="28" height="30" viewBox="0 0 28 30">
<path d="M7 1.2 H19.5 L26 7.7 V25 A1 1 0 0 1 25 26 H7 A1 1 0 0 1 6 25 V2.2 A1 1 0 0 1 7 1.2 Z" fill="#fff" stroke="#c9c9c9" stroke-width="1.1"/>
<path d="M19.5 1.2 V7.7 H26" fill="none" stroke="#c9c9c9" stroke-width="1.1"/>
<circle cx="19" cy="15.2" r="4.2" fill="#ee8d52"/>
<rect x="1" y="9" width="12.4" height="12.6" rx="1" fill="#c8452a"/>
<path d="M5 18.5 V12 H8 A2.2 2.2 0 0 1 8 16.4 H5" fill="none" stroke="#fde8e0" stroke-width="1.6"/>
<rect x="0.7" y="20.3" width="7.2" height="7.6" fill="#fff"/>
<path d="M2.3 26.6 L6 22.8 M3.8 22.6 H6.2 V25" fill="none" stroke="#2b79c8" stroke-width="1.5"/>
</svg><div class="a" style="left:250px;top:700px;width:700px;height:24px;overflow:hidden">
<svg style="left:19px;top:20px" width="16" height="12" viewBox="0 0 16 12"><path d="M4.2 10.9 A3.1 3.1 0 0 1 3.6 4.9 A3.9 3.9 0 0 1 10.9 4.9 A3 3 0 0 1 11.8 10.9 Z" fill="none" stroke="#4786c2" stroke-width="1.8" stroke-linejoin="round"/></svg>
<svg style="left:39px;top:12px" width="28" height="30" viewBox="0 0 28 30"><path d="M7 1.2 H19.5 L26 7.7 V25 A1 1 0 0 1 25 26 H7 A1 1 0 0 1 6 25 V2.2 A1 1 0 0 1 7 1.2 Z" fill="#fff" stroke="#c9c9c9" stroke-width="1.1"/><path d="M19.5 1.2 V7.7 H26" fill="none" stroke="#c9c9c9" stroke-width="1.1"/><circle cx="19" cy="15.2" r="4.2" fill="#ee8d52"/><rect x="1" y="9" width="12.4" height="12.6" rx="1" fill="#c8452a"/></svg>
<div class="t" style="left:77.6px;top:18.8px;font-size:13.6px">Annual Sales Report.pptx</div>
<div class="t" style="left:401px;top:19px;font-size:13.3px">3/11/2019 2:48 ...</div>
<div class="t" style="left:530.8px;top:18.6px;font-size:13.9px;color:#7d7d7d">OneDrive de Cherie</div>
</div>
<!-- scrollbar -->
<div class="a" style="left:956px;top:226px;width:19px;height:498px;background:#efefef"></div>
<div class="a" style="left:964.5px;top:247px;width:2.5px;height:395px;background:#858585;border-radius:2px"></div>
<svg style="left:923px;top:731px" width="16" height="13" viewBox="0 0 16 13"><path d="M1 1.3 H15 M1 4.8 H15 M1 8.3 H15 M1 11.8 H15" stroke="#3d3d3d" stroke-width="1.3"/></svg>
<svg style="left:949px;top:729px" width="17" height="17" viewBox="0 0 17 17"><rect x="1.6" y="1.7" width="13" height="10.6" rx="1" fill="none" stroke="#3d3d3d" stroke-width="1.4"/><rect x="1" y="14.3" width="14.5" height="1.4" fill="#5a5a5a"/></svg>
</body></html>
